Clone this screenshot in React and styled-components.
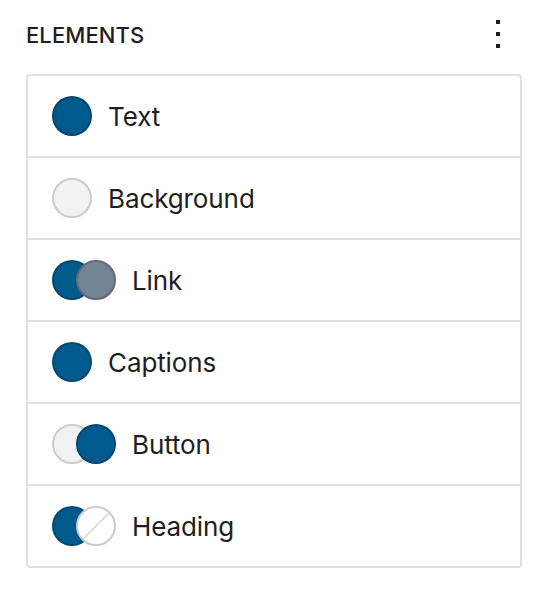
import React from "react";
import styled, { createGlobalStyle } from "styled-components";

const Global = createGlobalStyle`
  html, body { margin: 0; padding: 0; background: #fff; }
  body { font-family: Inter, "Noto Sans", sans-serif; color: #1e1e1e; -webkit-font-smoothing: antialiased; }
`;

const Panel = styled.div`
  padding: 10px 24px 0 26px;
  width: 546px;
  box-sizing: border-box;
`;

const Header = styled.div`
  display: flex;
  align-items: center;
  justify-content: space-between;
  height: 48px;
  margin-bottom: 16px;
`;

const Title = styled.h2`
  margin: 0;
  padding-top: 2px;
  font-size: 22px;
  font-weight: 500;
  letter-spacing: 0.1px;
  text-transform: uppercase;
  line-height: 1;
`;

const IconButton = styled.button`
  width: 48px;
  height: 48px;
  padding: 0;
  border: 0;
  background: transparent;
  display: flex;
  align-items: center;
  justify-content: center;
  color: #1e1e1e;
`;

const List = styled.div`
  border: 2px solid #e0e0e0;
  border-radius: 4px;
  display: flex;
  flex-direction: column;
`;

const Row = styled.div`
  display: flex;
  align-items: center;
  height: 80px;
  padding-left: 24px;
  gap: 16px;
  & + & { border-top: 2px solid #e0e0e0; }
`;

const Swatches = styled.div`
  display: flex;
  align-items: center;
`;

const Swatch = styled.span`
  position: relative;
  width: 40px;
  height: 40px;
  border-radius: 50%;
  box-sizing: border-box;
  flex: none;
  background: ${p => p.$color || "#fff"};
  border: 2px solid ${p => p.$border || "rgba(0,0,0,0.2)"};
  overflow: hidden;
  & + & { margin-left: -16px; }
  ${p => p.$none && `
    &::after {
      content: "";
      position: absolute;
      left: 50%;
      top: -4px;
      width: 2px;
      height: 44px;
      margin-left: -1px;
      background: #dcdcdc;
      transform: rotate(45deg);
    }
  `}
`;

const Label = styled.span`
  font-size: 26px;
  line-height: 1;
  font-weight: 400;
  padding-top: 2px;
  letter-spacing: -0.1px;
`;

const BLUE = "#005a8c";

const rows = [
  { label: "Text", swatches: [{ color: BLUE }] },
  { label: "Background", swatches: [{ color: "#f2f2f2", border: "#cccccc" }] },
  { label: "Link", swatches: [{ color: BLUE }, { color: "#748396", border: "#5f6b79" }] },
  { label: "Captions", swatches: [{ color: BLUE }] },
  { label: "Button", swatches: [{ color: "#f2f2f2", border: "#cccccc" }, { color: BLUE }] },
  { label: "Heading", swatches: [{ color: BLUE }, { color: "#fff", border: "#cccccc", none: true }] },
];

export default function App() {
  return (
    <>
      <Global />
      <Panel>
        <Header>
          <Title>Elements</Title>
          <IconButton aria-label="More">
            <svg width="48" height="48" viewBox="0 0 24 24" fill="currentColor">
              <path d="M13 19h-2v-2h2v2zm0-6h-2v-2h2v2zm0-6h-2V5h2v2z" />
            </svg>
          </IconButton>
        </Header>
        <List>
          {rows.map(r => (
            <Row key={r.label}>
              <Swatches>
                {r.swatches.map((s, i) => (
                  <Swatch key={i} $color={s.color} $border={s.border} $none={s.none} />
                ))}
              </Swatches>
              <Label>{r.label}</Label>
            </Row>
          ))}
        </List>
      </Panel>
    </>
  );
}
